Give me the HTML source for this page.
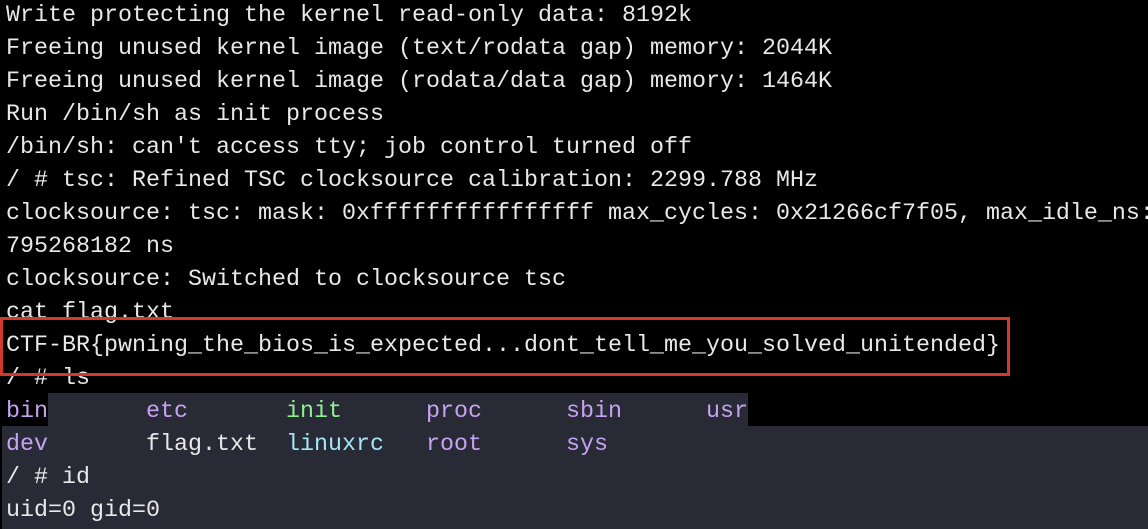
<!DOCTYPE html>
<html><head><style>
html,body{margin:0;padding:0;background:#000;width:1148px;height:529px;overflow:hidden}
.t{position:absolute;left:6px;top:0px;font-family:"Liberation Mono",monospace;font-size:23.33px;line-height:33px;color:#e8e8e8;white-space:pre}
.p{color:#c6a2f2}.g{color:#8ef08e}.c{color:#a4e6f6}
.bg1{position:absolute;left:48px;top:393px;width:700px;height:33px;background:#282a35}
.bg2{position:absolute;left:2px;top:426px;width:1146px;height:103px;background:#282a35}
.box{position:absolute;left:0;top:317px;width:1004px;height:53px;border:3px solid #d0392b}
</style></head><body>
<div class="bg1"></div><div class="bg2"></div>
<div class="t">Write protecting the kernel read-only data: 8192k
Freeing unused kernel image (text/rodata gap) memory: 2044K
Freeing unused kernel image (rodata/data gap) memory: 1464K
Run /bin/sh as init process
/bin/sh: can't access tty; job control turned off
/ # tsc: Refined TSC clocksource calibration: 2299.788 MHz
clocksource: tsc: mask: 0xffffffffffffffff max_cycles: 0x21266cf7f05, max_idle_ns:
795268182 ns
clocksource: Switched to clocksource tsc
cat flag.txt
CTF-BR{pwning_the_bios_is_expected...dont_tell_me_you_solved_unitended}
/ # ls
<span class="p">bin</span>       <span class="p">etc</span>       <span class="g">init</span>      <span class="p">proc</span>      <span class="p">sbin</span>      <span class="p">usr</span>
<span class="p">dev</span>       flag.txt  <span class="c">linuxrc</span>   <span class="p">root</span>      <span class="p">sys</span>
/ # id
uid=0 gid=0</div>
<div class="box"></div>
</body></html>
